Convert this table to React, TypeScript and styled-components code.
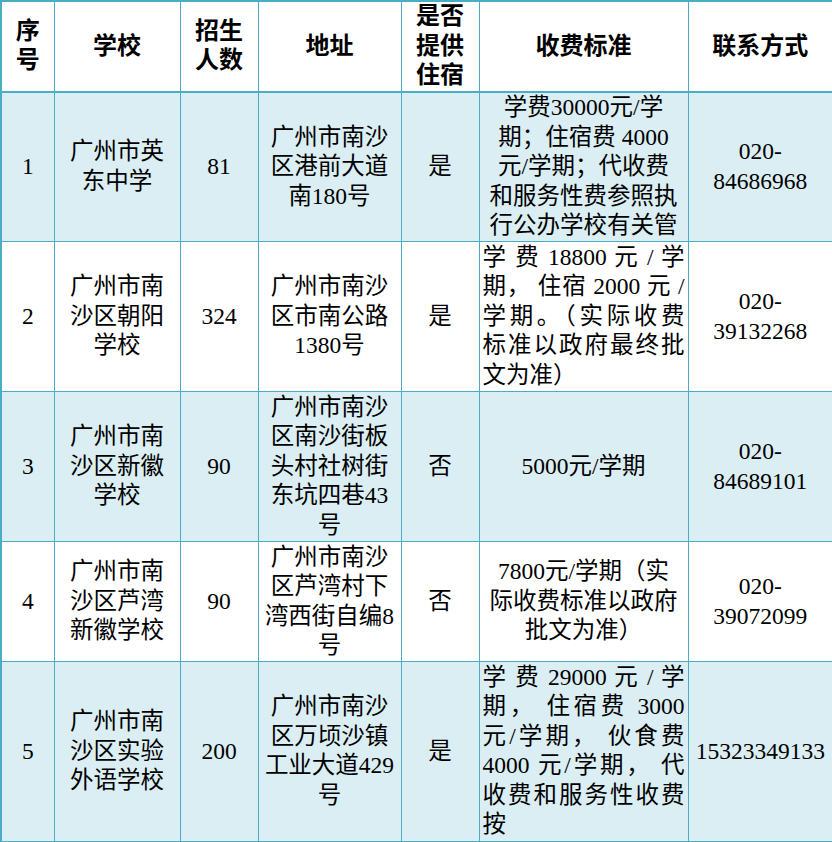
import React from 'react'
import styled, { createGlobalStyle } from 'styled-components'

const GlobalStyle = createGlobalStyle`
  html, body {
    margin: 0;
    padding: 0;
    background: #ffffff;
  }
  body {
    font-family: "Liberation Serif", "Noto Sans CJK SC", serif;
    color: #000000;
  }
`

const BORDER = '#4bacc6'
const STRIPE = '#daeef3'

type Align = 'center' | 'justify'

interface CellData {
  lines: string[]
  align?: Align
}

interface RowData {
  height: number
  cells: CellData[]
}

const widths = [53, 126, 78, 143, 78, 209, 145]

const header: string[][] = [
  ['序', '号'],
  ['学校'],
  ['招生', '人数'],
  ['地址'],
  ['是否', '提供', '住宿'],
  ['收费标准'],
  ['联系方式'],
]

const rows: RowData[] = [
  {
    height: 150,
    cells: [
      { lines: ['1'] },
      { lines: ['广州市英', '东中学'] },
      { lines: ['81'] },
      { lines: ['广州市南沙', '区港前大道', '南180号'] },
      { lines: ['是'] },
      { lines: ['学费30000元/学', '期；住宿费 4000', '元/学期；代收费', '和服务性费参照执', '行公办学校有关管'] },
      { lines: ['020-', '84686968'] },
    ],
  },
  {
    height: 150,
    cells: [
      { lines: ['2'] },
      { lines: ['广州市南', '沙区朝阳', '学校'] },
      { lines: ['324'] },
      { lines: ['广州市南沙', '区市南公路', '1380号'] },
      { lines: ['是'] },
      {
        lines: ['学 费 18800 元 / 学', '期， 住宿 2000 元 /', '学期。（实际收费', '标准以政府最终批', '文为准）'],
        align: 'justify',
      },
      { lines: ['020-', '39132268'] },
    ],
  },
  {
    height: 150,
    cells: [
      { lines: ['3'] },
      { lines: ['广州市南', '沙区新徽', '学校'] },
      { lines: ['90'] },
      { lines: ['广州市南沙', '区南沙街板', '头村社树街', '东坑四巷43', '号'] },
      { lines: ['否'] },
      { lines: ['5000元/学期'] },
      { lines: ['020-', '84689101'] },
    ],
  },
  {
    height: 120,
    cells: [
      { lines: ['4'] },
      { lines: ['广州市南', '沙区芦湾', '新徽学校'] },
      { lines: ['90'] },
      { lines: ['广州市南沙', '区芦湾村下', '湾西街自编8', '号'] },
      { lines: ['否'] },
      { lines: ['7800元/学期（实', '际收费标准以政府', '批文为准）'] },
      { lines: ['020-', '39072099'] },
    ],
  },
  {
    height: 180,
    cells: [
      { lines: ['5'] },
      { lines: ['广州市南', '沙区实验', '外语学校'] },
      { lines: ['200'] },
      { lines: ['广州市南沙', '区万顷沙镇', '工业大道429', '号'] },
      { lines: ['是'] },
      {
        lines: ['学 费 29000 元 / 学', '期， 住宿费 3000', '元/学期， 伙食费', '4000 元/学期， 代', '收费和服务性收费', '按'],
        align: 'justify',
      },
      { lines: ['15323349133'] },
    ],
  },
]

const Table = styled.table`
  width: 832px;
  border-collapse: collapse;
  table-layout: fixed;
  border: 2px solid ${BORDER};
`

const HeadRow = styled.tr`
  height: 88px;
  background: #ffffff;
  border-bottom: 2px solid ${BORDER};
`

const BodyRow = styled.tr<{ $striped: boolean }>`
  background: ${p => (p.$striped ? STRIPE : '#ffffff')};
`

const HeadCell = styled.th`
  border: 1px solid ${BORDER};
  padding: 0 2px;
  font-size: 24px;
  font-weight: bold;
  line-height: 29.5px;
  text-align: center;
  vertical-align: middle;
`

const Cell = styled.td`
  border: 1px solid ${BORDER};
  padding: 0 3px;
  font-size: 23.5px;
  line-height: 29.5px;
  text-align: center;
  vertical-align: middle;
  overflow: hidden;
`

const Line = styled.span<{ $justify: boolean }>`
  display: block;
  white-space: nowrap;
  text-align: ${p => (p.$justify ? 'justify' : 'inherit')};
  text-align-last: ${p => (p.$justify ? 'justify' : 'auto')};
`

const LastLine = styled.span`
  display: block;
  white-space: nowrap;
  text-align: left;
`

function Lines({ cell }: { cell: CellData }) {
  const justify = cell.align === 'justify'
  return (
    <>
      {cell.lines.map((line, i) => {
        const last = i === cell.lines.length - 1
        if (justify && last) return <LastLine key={i}>{line}</LastLine>
        return (
          <Line key={i} $justify={justify}>
            {line}
          </Line>
        )
      })}
    </>
  )
}

export default function App() {
  return (
    <>
      <GlobalStyle />
      <Table lang="zh-CN">
        <colgroup>
          {widths.map((w, i) => (
            <col key={i} style={{ width: w }} />
          ))}
        </colgroup>
        <thead>
          <HeadRow>
            {header.map((lines, i) => (
              <HeadCell key={i}>
                {lines.map((l, j) => (
                  <Line key={j} $justify={false}>
                    {l}
                  </Line>
                ))}
              </HeadCell>
            ))}
          </HeadRow>
        </thead>
        <tbody>
          {rows.map((row, i) => (
            <BodyRow key={i} $striped={i % 2 === 0} style={{ height: row.height }}>
              {row.cells.map((cell, j) => (
                <Cell key={j}>
                  <Lines cell={cell} />
                </Cell>
              ))}
            </BodyRow>
          ))}
        </tbody>
      </Table>
    </>
  )
}
